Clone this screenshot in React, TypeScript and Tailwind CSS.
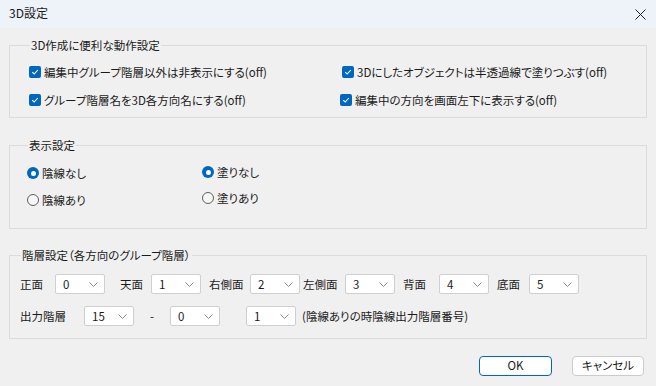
import React from 'react'

const font = { fontFamily: '"Noto Sans CJK JP", "Noto Sans", sans-serif' }

function Check({ label, className = '' }: { label: string; className?: string }) {
  return (
    <div className={`flex items-center h-[20px] ${className}`}>
      <span className="w-[12px] h-[12px] rounded-[2px] bg-[#0067c0] flex items-center justify-center mr-[3px]">
        <svg width="8" height="8" viewBox="0 0 8 8">
          <path d="M1.2 4.2 L3.2 6 L6.8 2" fill="none" stroke="#fff" strokeWidth="1.1" />
        </svg>
      </span>
      <span>{label}</span>
    </div>
  )
}

function Radio({ label, on }: { label: string; on?: boolean }) {
  return (
    <div className="flex items-center h-[20px]">
      {on ? (
        <span className="w-[12px] h-[12px] rounded-full bg-[#0067c0] flex items-center justify-center mr-[3px]">
          <span className="w-[5px] h-[5px] rounded-full bg-white" />
        </span>
      ) : (
        <span className="w-[12px] h-[12px] rounded-full border border-[#5f5f5f] bg-[#f6f6f6] mr-[3px]" />
      )}
      <span>{label}</span>
    </div>
  )
}

function Select({ value }: { value: string }) {
  return (
    <div className="w-[50px] h-[20px] bg-white border border-[#cfcfcf] rounded-[2px] flex items-center justify-between pl-[7px] pr-[6px] shrink-0">
      <span>{value}</span>
      <svg width="9" height="5" viewBox="0 0 9 5">
        <path d="M0.5 0.5 L4.5 4.5 L8.5 0.5" fill="none" stroke="#8a8a8a" strokeWidth="1" />
      </svg>
    </div>
  )
}

export default function App() {
  return (
    <div className="w-[656px] h-[386px] bg-[#f0f0f0] text-[11.5px] text-[#1a1a1a] leading-[16px] [font-feature-settings:'palt'] flex flex-col" style={font}>
      {/* Title bar */}
      <div className="h-[28px] bg-[#eef2f9] flex items-center justify-between pl-[9px] pr-[9px]">
        <span className="text-[12px] mt-[-2px]">3D設定</span>
        <svg width="11" height="11" viewBox="0 0 11 11" className="mr-[1px]">
          <path d="M0.5 0.5 L10.5 10.5 M10.5 0.5 L0.5 10.5" stroke="#222" strokeWidth="1" />
        </svg>
      </div>

      <div className="px-[9px] flex flex-col">
        {/* Group 1 */}
        <fieldset className="mt-[9px] border border-[#dcdcdc] pl-[19px] pt-[9px] pb-[7px]">
          <legend className="ml-[1px] px-px">3D作成に便利な動作設定</legend>
          <div className="grid grid-cols-[312px_1fr] gap-y-[8px]">
            <Check label="編集中グループ階層以外は非表示にする(off)" />
            <Check label="3Dにしたオブジェクトは半透過線で塗りつぶす(off)" className="ml-[1px]" />
            <Check label="グループ階層名を3D各方向名にする(off)" />
            <Check label="編集中の方向を画面左下に表示する(off)" className="ml-[-1px]" />
          </div>
        </fieldset>

        {/* Group 2 */}
        <fieldset className="mt-[19px] border border-[#dcdcdc] pl-[17px] pb-[18px] flex">
          <legend className="ml-[1px] px-px">表示設定</legend>
          <div className="flex">
            <div className="w-[175px] flex flex-col gap-[7px] pt-[10px]">
              <Radio label="陰線なし" on />
              <Radio label="陰線あり" />
            </div>
            <div className="flex flex-col gap-[6px] pt-[9px]">
              <Radio label="塗りなし" on />
              <Radio label="塗りあり" />
            </div>
          </div>
        </fieldset>

        {/* Group 3 */}
        <fieldset className="mt-[18px] border border-[#dcdcdc] pl-[10px] pt-[11px] pb-[12px]">
          <legend className="ml-[1px] px-px">階層設定（各方向のグループ階層）</legend>
          <div className="flex items-center h-[20px]">
            <span className="w-[35px]">正面</span>
            <Select value="0" />
            <span className="ml-[15px] w-[31px]">天面</span>
            <Select value="1" />
            <span className="ml-[8px] w-[41px]">右側面</span>
            <Select value="2" />
            <span className="ml-[3px] w-[42px]">左側面</span>
            <Select value="3" />
            <span className="ml-[8px] w-[36px]">背面</span>
            <Select value="4" />
            <span className="ml-[8px] w-[32px]">底面</span>
            <Select value="5" />
          </div>
          <div className="flex items-center h-[20px] mt-[12px]">
            <span className="w-[64px]">出力階層</span>
            <Select value="15" />
            <span className="w-[36px] text-center">-</span>
            <Select value="0" />
            <span className="w-[26px]" />
            <Select value="1" />
            <span className="ml-[6px]">(陰線ありの時陰線出力階層番号)</span>
          </div>
        </fieldset>

        {/* Buttons */}
        <div className="flex justify-end gap-[20px] mt-[17px] pr-[3px]">
          <button className="w-[73px] h-[20px] bg-white border border-[#0067c0] rounded-[4px] leading-none">OK</button>
          <button className="w-[72px] h-[20px] bg-white border border-[#cccccc] rounded-[4px] leading-none">キャンセル</button>
        </div>
      </div>
    </div>
  )
}
